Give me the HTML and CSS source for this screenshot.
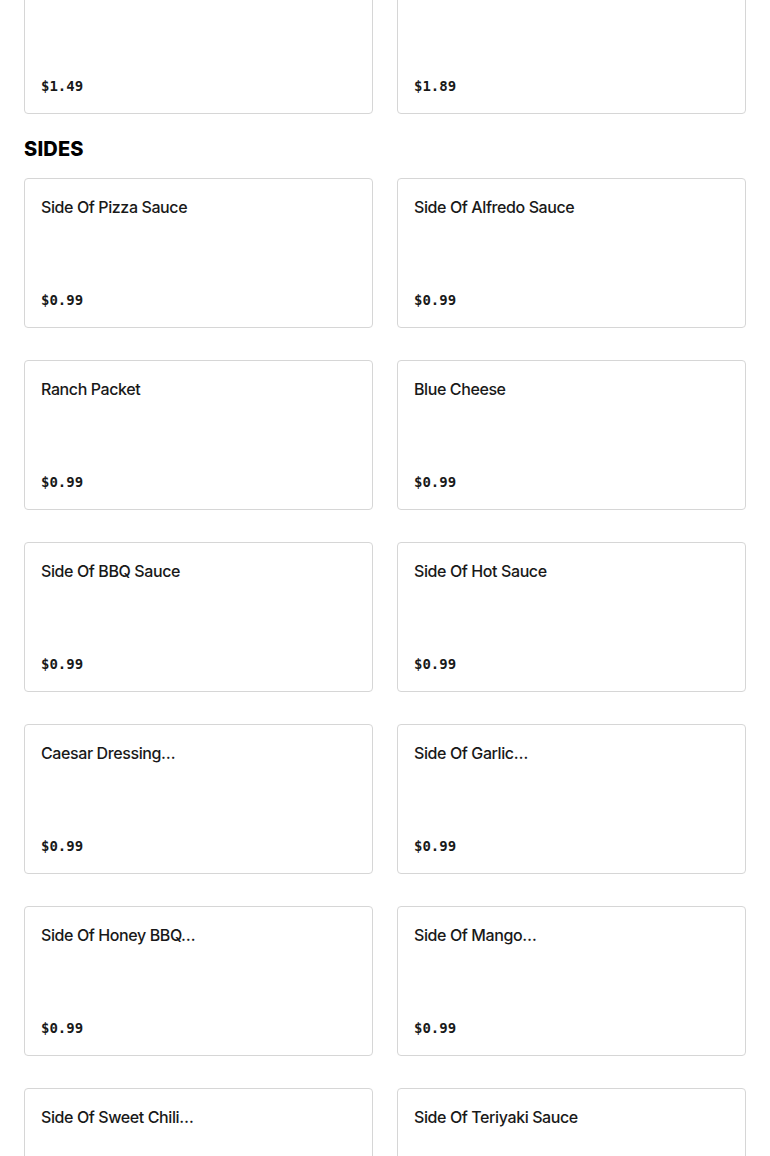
FILE: index.html
```html
<!DOCTYPE html>
<html lang="en">
<head>
<meta charset="utf-8">
<title>Menu</title>
<link rel="stylesheet" href="styles.css">
</head>
<body>
<div class="page">
  <div class="grid grid-prev">
    <div class="card"><div class="title"></div><div class="price">$1.49</div></div>
    <div class="card"><div class="title"></div><div class="price">$1.89</div></div>
  </div>
  <h2 class="section-title">SIDES</h2>
  <div class="grid">
    <div class="card"><div class="title">Side Of Pizza Sauce</div><div class="price">$0.99</div></div>
    <div class="card"><div class="title">Side Of Alfredo Sauce</div><div class="price">$0.99</div></div>
    <div class="card"><div class="title">Ranch Packet</div><div class="price">$0.99</div></div>
    <div class="card"><div class="title">Blue Cheese</div><div class="price">$0.99</div></div>
    <div class="card"><div class="title">Side Of BBQ Sauce</div><div class="price">$0.99</div></div>
    <div class="card"><div class="title">Side Of Hot Sauce</div><div class="price">$0.99</div></div>
    <div class="card"><div class="title">Caesar Dressing…</div><div class="price">$0.99</div></div>
    <div class="card"><div class="title">Side Of Garlic…</div><div class="price">$0.99</div></div>
    <div class="card"><div class="title">Side Of Honey BBQ…</div><div class="price">$0.99</div></div>
    <div class="card"><div class="title">Side Of Mango…</div><div class="price">$0.99</div></div>
    <div class="card card-last"><div class="title">Side Of Sweet Chili…</div></div>
    <div class="card card-last"><div class="title">Side Of Teriyaki Sauce</div></div>
  </div>
</div>
</body>
</html>
```
FILE: styles.css
```css
html, body {
  margin: 0;
  padding: 0;
  background: #ffffff;
  overflow: hidden;
}
body {
  font-family: "Inter", "Liberation Sans", sans-serif;
  color: #191919;
}
.page {
  padding: 0 24px;
}
.grid {
  display: grid;
  grid-template-columns: 1fr 1fr;
  column-gap: 24px;
  row-gap: 32px;
}
.grid-prev {
  margin-top: -36px;
}
.section-title {
  margin: 23px 0 17px;
  font-size: 20px;
  line-height: 24px;
  font-weight: 800;
  color: #000000;
  letter-spacing: 0.2px;
}
.card {
  box-sizing: border-box;
  height: 150px;
  border: 1px solid #d6d6d6;
  border-radius: 4px;
  padding: 16px;
  display: flex;
  flex-direction: column;
  justify-content: space-between;
}
.title {
  font-size: 16px;
  line-height: 24px;
  font-weight: 550;
  letter-spacing: -0.4px;
  color: #191919;
  min-height: 24px;
}
.price {
  font-family: "DejaVu Sans Mono", "Liberation Mono", monospace;
  font-size: 14px;
  line-height: 22px;
  font-weight: 600;
  color: #191919;
}
```
